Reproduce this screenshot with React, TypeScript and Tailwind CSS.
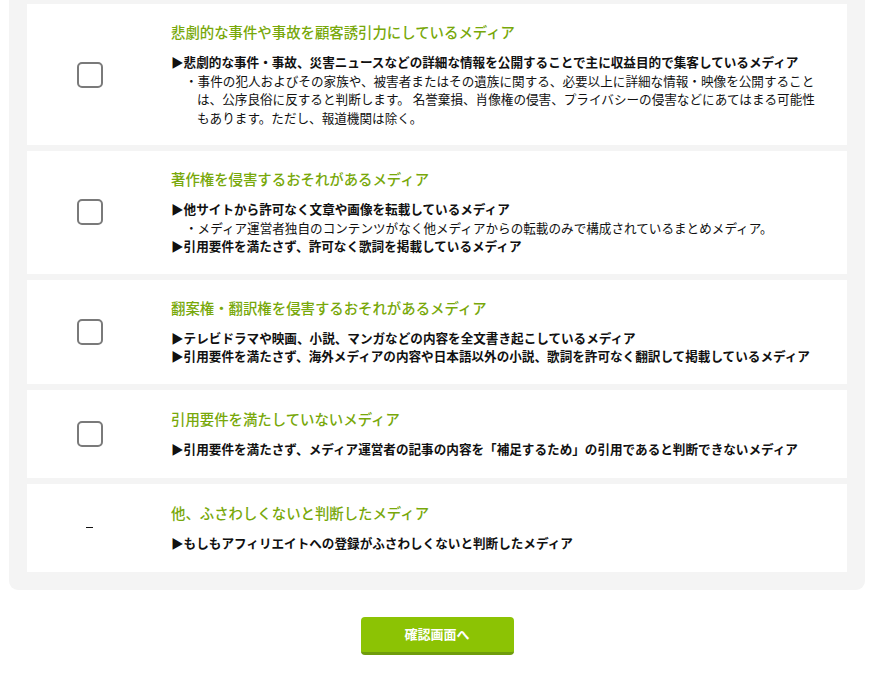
import { ReactNode } from "react";

type Item = {
  title: string;
  lines: ReactNode[];
  dash?: boolean;
};

function Main({ children }: { children: ReactNode }) {
  return <p className="font-bold whitespace-nowrap">{children}</p>;
}

function Sub({ children }: { children: ReactNode }) {
  return <p className="ml-[26px] -indent-[12px] whitespace-nowrap">{children}</p>;
}

const items: Item[] = [
  {
    title: "悲劇的な事件や事故を顧客誘引力にしているメディア",
    lines: [
      <Main key="a">▶悲劇的な事件・事故、災害ニュースなどの詳細な情報を公開することで主に収益目的で集客しているメディア</Main>,
      <Sub key="b">
        ・事件の犯人およびその家族や、被害者またはその遺族に関する、必要以上に詳細な情報・映像を公開すること
        <br />
        は、公序良俗に反すると判断します。 名誉棄損、肖像権の侵害、プライバシーの侵害などにあてはまる可能性
        <br />
        もあります。ただし、報道機関は除く。
      </Sub>,
    ],
  },
  {
    title: "著作権を侵害するおそれがあるメディア",
    lines: [
      <Main key="a">▶他サイトから許可なく文章や画像を転載しているメディア</Main>,
      <Sub key="b">・メディア運営者独自のコンテンツがなく他メディアからの転載のみで構成されているまとめメディア。</Sub>,
      <Main key="c">▶引用要件を満たさず、許可なく歌詞を掲載しているメディア</Main>,
    ],
  },
  {
    title: "翻案権・翻訳権を侵害するおそれがあるメディア",
    lines: [
      <Main key="a">▶テレビドラマや映画、小説、マンガなどの内容を全文書き起こしているメディア</Main>,
      <Main key="b">▶引用要件を満たさず、海外メディアの内容や日本語以外の小説、歌詞を許可なく翻訳して掲載しているメディア</Main>,
    ],
  },
  {
    title: "引用要件を満たしていないメディア",
    lines: [
      <Main key="a">▶引用要件を満たさず、メディア運営者の記事の内容を「補足するため」の引用であると判断できないメディア</Main>,
    ],
  },
  {
    title: "他、ふさわしくないと判断したメディア",
    lines: [<Main key="a">▶もしもアフィリエイトへの登録がふさわしくないと判断したメディア</Main>],
    dash: true,
  },
];

export default function App() {
  return (
    <div
      className="min-h-[678px] bg-white text-[#111]"
      style={{ fontFamily: '"Noto Sans CJK JP", "Noto Sans", sans-serif' }}
    >
      <div className="mx-[9px] flex flex-col gap-[6px] rounded-b-[9px] bg-[#f4f4f4] px-[18px] pt-[4px] pb-[18px]">
        {items.map((item) => (
          <div key={item.title} className="flex min-h-[88px] items-center bg-white">
            <div className="flex w-[125px] shrink-0 items-center justify-center">
              {item.dash ? (
                <span className="block h-[1.5px] w-[7px] bg-[#111]" />
              ) : (
                <span className="block h-[26px] w-[26px] rounded-[5px] border-2 border-[#7a7a7a] bg-white" />
              )}
            </div>
            <div className="ml-[19px] pt-[18px] pb-[18px]">
              <h3 className="text-[14.4px] leading-[20px] font-medium text-[#78a80a]">{item.title}</h3>
              <div className="mt-[11px] text-[12.6px] leading-[18.5px]">{item.lines}</div>
            </div>
          </div>
        ))}
      </div>
      <div className="flex justify-center pt-[27px]">
        <button className="h-[38px] w-[153px] rounded-[4px] border-b-[3px] border-[#6f9c0c] bg-[#8cc304] text-[13px] font-bold text-white">
          確認画面へ
        </button>
      </div>
    </div>
  );
}
